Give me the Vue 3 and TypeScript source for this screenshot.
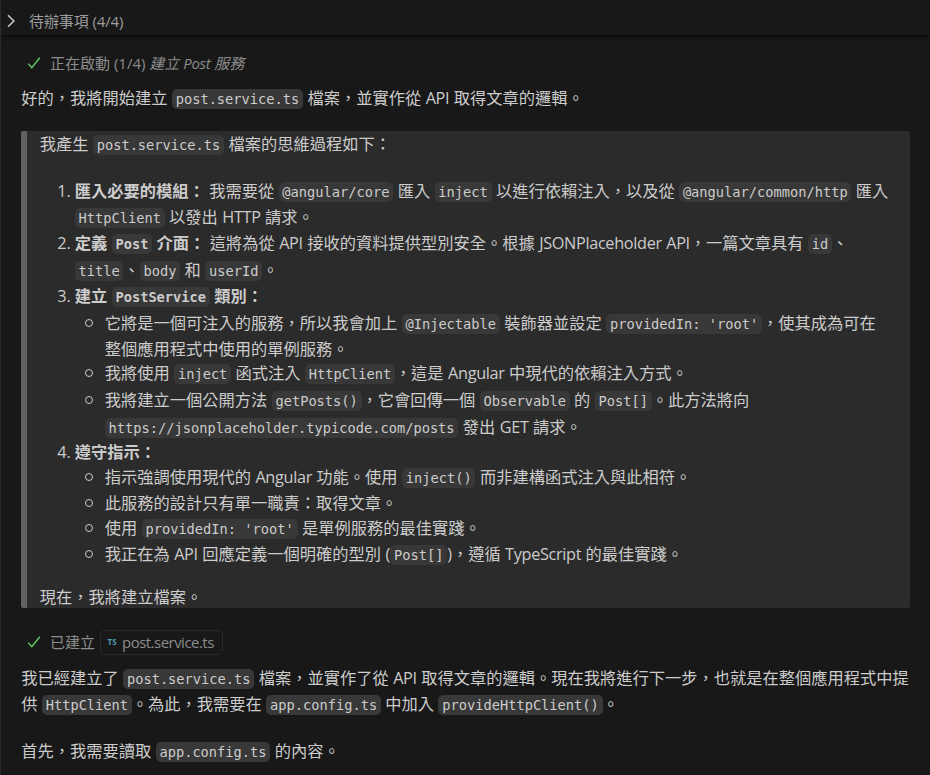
<script setup lang="ts">
import { defineComponent, h, type VNode } from 'vue'

interface Line {
  text: string
  size: string
}
interface Item {
  lines: Line[]
  children?: Line[][]
}

/** Turns `code` and **strong** markup into inline elements. */
function inline(text: string): (VNode | string)[] {
  return text
    .split(/(\*\*.+?\*\*|`[^`]+`|[A-Za-z]+)/)
    .filter(Boolean)
    .map((part) => {
      if (part.startsWith('**')) return h('strong', inline(part.slice(2, -2)))
      if (part.startsWith('`')) return h('code', part.slice(1, -1))
      if (/^[A-Za-z]+$/.test(part)) return h('span', { class: 'latin' }, part)
      return part
    })
}

const Rich = defineComponent({
  props: { text: { type: String, required: true } },
  setup: (props) => () => h('span', { class: 'rich' }, inline(props.text)),
})

const line = (text: string, size = 'l26'): Line => ({ text, size })

const items: Item[] = [
  {
    lines: [
      line('**匯入必要的模組：** 我需要從 `@angular/core` 匯入 `inject` 以進行依賴注入，以及從 `@angular/common/http` 匯入'),
      line('`HttpClient` 以發出 HTTP 請求。'),
    ],
  },
  {
    lines: [
      line('**定義 `Post` 介面：** 這將為從 API 接收的資料提供型別安全。根據 JSONPlaceholder API，一篇文章具有 `id`、', 'l27'),
      line('`title`、`body` 和 `userId`。'),
    ],
  },
  {
    lines: [line('**建立 `PostService` 類別：**', 'l27')],
    children: [
      [
        line("它將是一個可注入的服務，所以我會加上 `@Injectable` 裝飾器並設定 `providedIn: 'root'`，使其成為可在"),
        line('整個應用程式中使用的單例服務。', 'l24'),
      ],
      [line('我將使用 `inject` 函式注入 `HttpClient`，這是 Angular 中現代的依賴注入方式。', 'l27')],
      [
        line('我將建立一個公開方法 `getPosts()`，它會回傳一個 `Observable` 的 `Post[]`。此方法將向', 'l27'),
        line('`https://jsonplaceholder.typicode.com/posts` 發出 GET 請求。', 'l25'),
      ],
    ],
  },
  {
    lines: [line('**遵守指示：**', 'l25')],
    children: [
      [line('指示強調使用現代的 Angular 功能。使用 `inject()` 而非建構函式注入與此相符。')],
      [line('此服務的設計只有單一職責：取得文章。', 'l25')],
      [line("使用 `providedIn: 'root'` 是單例服務的最佳實踐。")],
      [line('我正在為 API 回應定義一個明確的型別 (`Post[]`)，遵循 TypeScript 的最佳實踐。')],
    ],
  },
]
</script>

<template>
  <main class="chat" lang="zh-Hant">
    <header class="todo">
      <svg class="chevron" viewBox="0 0 16 16"><path d="M5 2.2 10.9 8 5 13.8" /></svg>
      <span>待辦事項 (4/4)</span>
    </header>

    <section class="body">
      <div class="status starting">
        <svg class="check" viewBox="0 0 14 14"><path d="M1.2 7.6 4.8 11.6 12.8 1.8" /></svg>
        <span>正在啟動 (1/4) <em>建立 <span class="latin">Post</span> 服務</em></span>
      </div>

      <p class="intro"><Rich text="好的，我將開始建立 `post.service.ts` 檔案，並實作從 API 取得文章的邏輯。" /></p>

      <blockquote class="thinking">
        <p><Rich text="我產生 `post.service.ts` 檔案的思維過程如下：" /></p>
        <ol>
          <li v-for="(item, i) in items" :key="i" class="step">
            <span class="number">{{ i + 1 }}.</span>
            <div v-for="l in item.lines" :key="l.text" class="line" :class="l.size"><Rich :text="l.text" /></div>
            <ul v-if="item.children">
              <li v-for="(child, j) in item.children" :key="j">
                <i class="bullet"></i>
                <div v-for="l in child" :key="l.text" class="line" :class="l.size"><Rich :text="l.text" /></div>
              </li>
            </ul>
          </li>
        </ol>
        <p class="closing"><Rich text="現在，我將建立檔案。" /></p>
      </blockquote>

      <div class="status created">
        <svg class="check" viewBox="0 0 14 14"><path d="M1.2 7.6 4.8 11.6 12.8 1.8" /></svg>
        <span>已建立</span>
        <span class="file"><b>TS</b><span class="name">post.service.ts</span></span>
      </div>

      <p><Rich text="我已經建立了 `post.service.ts` 檔案，並實作了從 API 取得文章的邏輯。現在我將進行下一步，也就是在整個應用程式中提" /></p>
      <p><Rich text="供 `HttpClient`。為此，我需要在 `app.config.ts` 中加入 `provideHttpClient()`。" /></p>
      <p class="next"><Rich text="首先，我需要讀取 `app.config.ts` 的內容。" /></p>
    </section>
  </main>
</template>

<style>
body {
  background: #181818;
}
</style>

<style scoped>
.chat {
  box-sizing: border-box;
  height: 775px;
  overflow: hidden;
  border-left: 1px solid #2b2b2b;
  background: #181818;
  color: #cccccc;
  font-family: 'Open Sans', 'Noto Sans CJK TC', sans-serif;
  font-size: 16.25px;
  line-height: 26px;
  white-space: nowrap;
}
.todo {
  box-sizing: border-box;
  display: flex;
  align-items: center;
  height: 35px;
  padding: 6px 0 0 2px;
  color: #9d9d9d;
  font-size: 15px;
  letter-spacing: -0.1px;
  box-shadow: 0 1px 4px rgba(0, 0, 0, 0.8);
}
.chevron {
  width: 16px;
  height: 16px;
  margin-right: 10px;
  fill: none;
  stroke: #cccccc;
  stroke-width: 1.5;
}
.body {
  padding: 0 20px 0 20.25px;
}
p {
  margin: 0;
  height: 26px;
}
.status {
  display: flex;
  align-items: center;
  color: #8c8c8c;
  font-size: 15px;
}
.starting {
  height: 26px;
  margin-top: 15px;
}
.check {
  width: 14px;
  height: 14px;
  margin: 0 9.25px 0 5.5px;
  fill: none;
  stroke: #5fd068;
  stroke-width: 1.4;
}
.intro {
  padding-top: 9px;
}
.thinking {
  box-sizing: border-box;
  height: 477px;
  margin: 20px 0 0 -0.25px;
  padding: 0 0 0 12.75px;
  border-left: 6px solid #616161;
  border-radius: 2px;
  background: #2b2b2b;
}
ol,
ul,
li {
  margin: 0;
  padding: 0;
  list-style: none;
}
ol {
  padding: 21px 0 0 35px;
}
ul {
  padding-left: 30px;
}
li {
  position: relative;
}
.number {
  position: absolute;
  right: 100%;
  top: 0;
  margin-right: 4px;
}
.bullet {
  position: absolute;
  box-sizing: border-box;
  left: -20px;
  top: 9px;
  width: 8px;
  height: 8px;
  border: 1.3px solid #cccccc;
  border-radius: 50%;
}
.line {
  line-height: 26px;
}
.l24 {
  height: 24px;
}
.l25 {
  height: 25px;
}
.l26 {
  height: 26px;
}
.l27 {
  height: 27px;
}
.closing {
  padding-top: 17px;
}
.rich {
  word-spacing: 0.2px;
}
.rich :deep(strong) {
  font-weight: 700;
}
.rich :deep(code) {
  padding: 2px 3.75px;
  border-radius: 5px;
  background: #383838;
  font-family: 'DejaVu Sans Mono', monospace;
  font-size: 13.7px;
  line-height: 16px;
  word-spacing: 0;
}
.rich :deep(.latin),
.latin {
  letter-spacing: -0.02em;
}
.created {
  height: 26px;
  margin: 21px 0 10px;
}
.file {
  box-sizing: border-box;
  display: flex;
  align-items: center;
  width: 123px;
  height: 25px;
  margin-left: 5px;
  padding: 0 6.5px;
  border: 1px solid #2b2b2b;
  border-radius: 5px;
}
.file b {
  width: 14.5px;
  color: #519aba;
  font-size: 8px;
}
.name {
  letter-spacing: -0.035em;
  font-size: 15px;
}
.next {
  padding-top: 21px;
}
</style>
